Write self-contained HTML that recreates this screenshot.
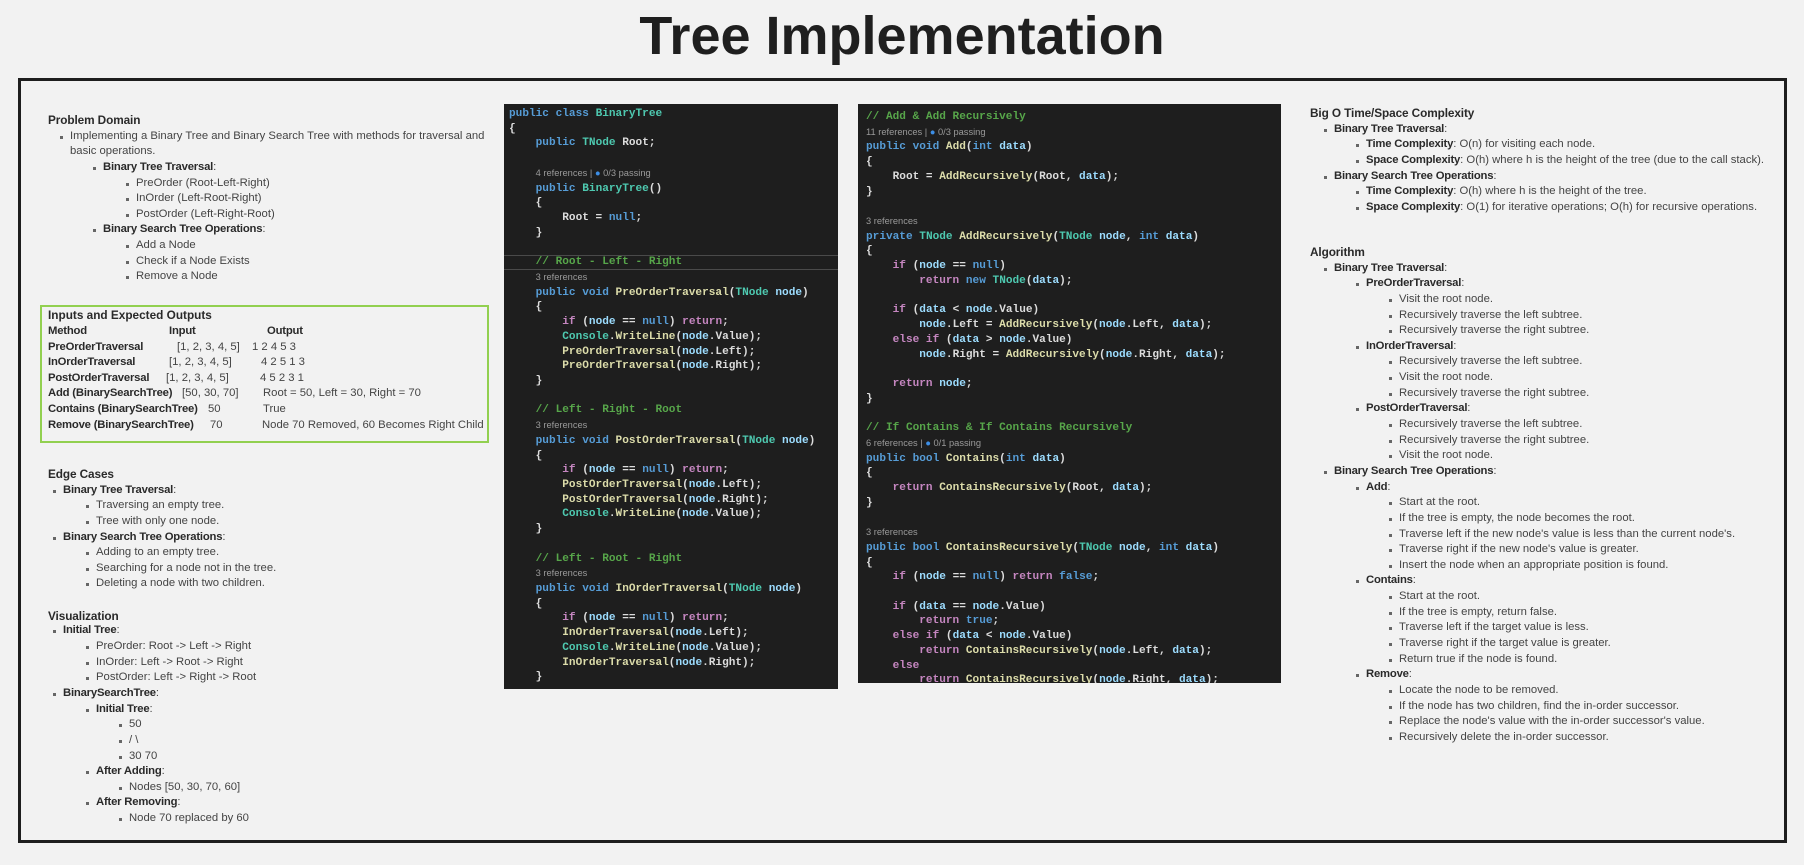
<!DOCTYPE html>
<html><head><meta charset="utf-8">
<style>
*{margin:0;padding:0;box-sizing:border-box}
body{width:1804px;height:865px;background:#f2f2f2;position:relative;overflow:hidden;font-family:"Liberation Sans",sans-serif;color:#444}
h1{position:absolute;left:0;width:1804px;top:9px;line-height:1;text-align:center;font-size:54px;font-weight:bold;color:#1f1f1f}
.frame{position:absolute;left:18px;top:78px;width:1769px;height:765px;border:3.5px solid #1e1e1e}
.blk{position:absolute;font-size:11.3px;line-height:15.65px;white-space:nowrap}
.blk div{position:relative;height:15.65px}
.h{font-weight:bold;color:#2a2a2a;font-size:11.8px;letter-spacing:-0.1px}
b{color:#2a2a2a;letter-spacing:-0.2px}
.b::before{content:"";position:absolute;width:3px;height:3px;background:#666;left:-10px;top:7px}
.code{position:absolute;background:#1e1e1e;overflow:hidden}
.code pre{font-family:"Liberation Mono",monospace;font-size:11.1px;line-height:14.72px;color:#dcdcdc;font-weight:bold;position:absolute}
.k{color:#569cd6}.t{color:#4ec9b0}.m{color:#dcdcaa}.v{color:#9cdcfe}.c{color:#c586c0}.g{color:#57a64a}
.r{font-family:"Liberation Sans",sans-serif;font-size:9.3px;color:#9a9a9a;font-weight:normal}
.r i{font-style:normal;color:#3c8ee6}
.green{position:absolute;left:40px;top:305px;width:449px;height:138px;border:2px solid #92d050}
.tb{position:absolute;font-size:11.3px;white-space:nowrap;line-height:15.7px}
</style></head><body>
<h1>Tree Implementation</h1>
<div class="frame"></div>

<div class="blk" style="left:48px;top:113px">
<div class="h">Problem Domain</div>
<div class="b" style="left:22px">Implementing a Binary Tree and Binary Search Tree with methods for traversal and</div>
<div style="left:22px">basic operations.</div>
<div class="b" style="left:55px"><b>Binary Tree Traversal</b>:</div>
<div class="b" style="left:88px">PreOrder (Root-Left-Right)</div>
<div class="b" style="left:88px">InOrder (Left-Root-Right)</div>
<div class="b" style="left:88px">PostOrder (Left-Right-Root)</div>
<div class="b" style="left:55px"><b>Binary Search Tree Operations</b>:</div>
<div class="b" style="left:88px">Add a Node</div>
<div class="b" style="left:88px">Check if a Node Exists</div>
<div class="b" style="left:88px">Remove a Node</div>
</div>

<div class="green"></div>
<div class="tb" style="left:48px;top:308px;font-weight:bold;color:#2a2a2a;font-size:11.8px">Inputs and Expected Outputs</div>
<div class="tb" style="left:48px;top:324px"><b>Method</b></div>
<div class="tb" style="left:169px;top:324px"><b>Input</b></div>
<div class="tb" style="left:267px;top:324px"><b>Output</b></div>
<div class="tb" style="left:48px;top:340px"><b>PreOrderTraversal</b></div><div class="tb" style="left:177px;top:340px">[1, 2, 3, 4, 5]</div><div class="tb" style="left:252px;top:340px">1 2 4 5 3</div>
<div class="tb" style="left:48px;top:355px"><b>InOrderTraversal</b></div><div class="tb" style="left:169px;top:355px">[1, 2, 3, 4, 5]</div><div class="tb" style="left:261px;top:355px">4 2 5 1 3</div>
<div class="tb" style="left:48px;top:371px"><b>PostOrderTraversal</b></div><div class="tb" style="left:166px;top:371px">[1, 2, 3, 4, 5]</div><div class="tb" style="left:260px;top:371px">4 5 2 3 1</div>
<div class="tb" style="left:48px;top:386px"><b>Add (BinarySearchTree)</b></div><div class="tb" style="left:182px;top:386px">[50, 30, 70]</div><div class="tb" style="left:263px;top:386px">Root = 50, Left = 30, Right = 70</div>
<div class="tb" style="left:48px;top:402px"><b>Contains (BinarySearchTree)</b></div><div class="tb" style="left:208px;top:402px">50</div><div class="tb" style="left:263px;top:402px">True</div>
<div class="tb" style="left:48px;top:418px"><b>Remove (BinarySearchTree)</b></div><div class="tb" style="left:210px;top:418px">70</div><div class="tb" style="left:262px;top:418px">Node 70 Removed, 60 Becomes Right Child</div>

<div class="blk" style="left:48px;top:467px">
<div class="h">Edge Cases</div>
<div class="b" style="left:15px"><b>Binary Tree Traversal</b>:</div>
<div class="b" style="left:48px">Traversing an empty tree.</div>
<div class="b" style="left:48px">Tree with only one node.</div>
<div class="b" style="left:15px"><b>Binary Search Tree Operations</b>:</div>
<div class="b" style="left:48px">Adding to an empty tree.</div>
<div class="b" style="left:48px">Searching for a node not in the tree.</div>
<div class="b" style="left:48px">Deleting a node with two children.</div>
<div></div>
<div class="h" style="top:1px">Visualization</div>
<div class="b" style="left:15px"><b>Initial Tree</b>:</div>
<div class="b" style="left:48px">PreOrder: Root -&gt; Left -&gt; Right</div>
<div class="b" style="left:48px">InOrder: Left -&gt; Root -&gt; Right</div>
<div class="b" style="left:48px">PostOrder: Left -&gt; Right -&gt; Root</div>
<div class="b" style="left:15px"><b>BinarySearchTree</b>:</div>
<div class="b" style="left:48px"><b>Initial Tree</b>:</div>
<div class="b" style="left:81px">50</div>
<div class="b" style="left:81px">/ \</div>
<div class="b" style="left:81px">30 70</div>
<div class="b" style="left:48px"><b>After Adding</b>:</div>
<div class="b" style="left:81px">Nodes [50, 30, 70, 60]</div>
<div class="b" style="left:48px"><b>After Removing</b>:</div>
<div class="b" style="left:81px">Node 70 replaced by 60</div>
</div>

<div class="code" style="left:504px;top:104px;width:334px;height:585px">
<div style="position:absolute;left:0;right:0;top:151px;height:15px;border-top:1px solid #4a4a4a;border-bottom:1px solid #4a4a4a"></div>
<pre style="left:5px;top:3px"><span class="k">public class</span> <span class="t">BinaryTree</span>
{
    <span class="k">public</span> <span class="t">TNode</span> Root;

    <span class="r">4 references | <i>●</i> 0/3 passing</span>
    <span class="k">public</span> <span class="t">BinaryTree</span>()
    {
        Root = <span class="k">null</span>;
    }

    <span class="g">// Root - Left - Right</span>
    <span class="r">3 references</span>
    <span class="k">public void</span> <span class="m">PreOrderTraversal</span>(<span class="t">TNode</span> <span class="v">node</span>)
    {
        <span class="c">if</span> (<span class="v">node</span> == <span class="k">null</span>) <span class="c">return</span>;
        <span class="t">Console</span>.<span class="m">WriteLine</span>(<span class="v">node</span>.Value);
        <span class="m">PreOrderTraversal</span>(<span class="v">node</span>.Left);
        <span class="m">PreOrderTraversal</span>(<span class="v">node</span>.Right);
    }

    <span class="g">// Left - Right - Root</span>
    <span class="r">3 references</span>
    <span class="k">public void</span> <span class="m">PostOrderTraversal</span>(<span class="t">TNode</span> <span class="v">node</span>)
    {
        <span class="c">if</span> (<span class="v">node</span> == <span class="k">null</span>) <span class="c">return</span>;
        <span class="m">PostOrderTraversal</span>(<span class="v">node</span>.Left);
        <span class="m">PostOrderTraversal</span>(<span class="v">node</span>.Right);
        <span class="t">Console</span>.<span class="m">WriteLine</span>(<span class="v">node</span>.Value);
    }

    <span class="g">// Left - Root - Right</span>
    <span class="r">3 references</span>
    <span class="k">public void</span> <span class="m">InOrderTraversal</span>(<span class="t">TNode</span> <span class="v">node</span>)
    {
        <span class="c">if</span> (<span class="v">node</span> == <span class="k">null</span>) <span class="c">return</span>;
        <span class="m">InOrderTraversal</span>(<span class="v">node</span>.Left);
        <span class="t">Console</span>.<span class="m">WriteLine</span>(<span class="v">node</span>.Value);
        <span class="m">InOrderTraversal</span>(<span class="v">node</span>.Right);
    }</pre>
</div>

<div class="code" style="left:858px;top:104px;width:423px;height:579px">
<pre style="left:8px;top:6px"><span class="g">// Add &amp; Add Recursively</span>
<span class="r">11 references | <i>●</i> 0/3 passing</span>
<span class="k">public void</span> <span class="m">Add</span>(<span class="k">int</span> <span class="v">data</span>)
{
    Root = <span class="m">AddRecursively</span>(Root, <span class="v">data</span>);
}

<span class="r">3 references</span>
<span class="k">private</span> <span class="t">TNode</span> <span class="m">AddRecursively</span>(<span class="t">TNode</span> <span class="v">node</span>, <span class="k">int</span> <span class="v">data</span>)
{
    <span class="c">if</span> (<span class="v">node</span> == <span class="k">null</span>)
        <span class="c">return</span> <span class="k">new</span> <span class="t">TNode</span>(<span class="v">data</span>);

    <span class="c">if</span> (<span class="v">data</span> &lt; <span class="v">node</span>.Value)
        <span class="v">node</span>.Left = <span class="m">AddRecursively</span>(<span class="v">node</span>.Left, <span class="v">data</span>);
    <span class="c">else if</span> (<span class="v">data</span> &gt; <span class="v">node</span>.Value)
        <span class="v">node</span>.Right = <span class="m">AddRecursively</span>(<span class="v">node</span>.Right, <span class="v">data</span>);

    <span class="c">return</span> <span class="v">node</span>;
}

<span class="g">// If Contains &amp; If Contains Recursively</span>
<span class="r">6 references | <i>●</i> 0/1 passing</span>
<span class="k">public bool</span> <span class="m">Contains</span>(<span class="k">int</span> <span class="v">data</span>)
{
    <span class="c">return</span> <span class="m">ContainsRecursively</span>(Root, <span class="v">data</span>);
}

<span class="r">3 references</span>
<span class="k">public bool</span> <span class="m">ContainsRecursively</span>(<span class="t">TNode</span> <span class="v">node</span>, <span class="k">int</span> <span class="v">data</span>)
{
    <span class="c">if</span> (<span class="v">node</span> == <span class="k">null</span>) <span class="c">return</span> <span class="k">false</span>;

    <span class="c">if</span> (<span class="v">data</span> == <span class="v">node</span>.Value)
        <span class="c">return</span> <span class="k">true</span>;
    <span class="c">else if</span> (<span class="v">data</span> &lt; <span class="v">node</span>.Value)
        <span class="c">return</span> <span class="m">ContainsRecursively</span>(<span class="v">node</span>.Left, <span class="v">data</span>);
    <span class="c">else</span>
        <span class="c">return</span> <span class="m">ContainsRecursively</span>(<span class="v">node</span>.Right, <span class="v">data</span>);</pre>
</div>

<div class="blk" style="left:1310px;top:106px">
<div class="h">Big O Time/Space Complexity</div>
<div class="b" style="left:24px"><b>Binary Tree Traversal</b>:</div>
<div class="b" style="left:56px"><b>Time Complexity</b>: O(n) for visiting each node.</div>
<div class="b" style="left:56px"><b>Space Complexity</b>: O(h) where h is the height of the tree (due to the call stack).</div>
<div class="b" style="left:24px"><b>Binary Search Tree Operations</b>:</div>
<div class="b" style="left:56px"><b>Time Complexity</b>: O(h) where h is the height of the tree.</div>
<div class="b" style="left:56px"><b>Space Complexity</b>: O(1) for iterative operations; O(h) for recursive operations.</div>
</div>
<div class="blk" style="left:1310px;top:245px">
<div class="h">Algorithm</div>
<div class="b" style="left:24px"><b>Binary Tree Traversal</b>:</div>
<div class="b" style="left:56px"><b>PreOrderTraversal</b>:</div>
<div class="b" style="left:89px">Visit the root node.</div>
<div class="b" style="left:89px">Recursively traverse the left subtree.</div>
<div class="b" style="left:89px">Recursively traverse the right subtree.</div>
<div class="b" style="left:56px"><b>InOrderTraversal</b>:</div>
<div class="b" style="left:89px">Recursively traverse the left subtree.</div>
<div class="b" style="left:89px">Visit the root node.</div>
<div class="b" style="left:89px">Recursively traverse the right subtree.</div>
<div class="b" style="left:56px"><b>PostOrderTraversal</b>:</div>
<div class="b" style="left:89px">Recursively traverse the left subtree.</div>
<div class="b" style="left:89px">Recursively traverse the right subtree.</div>
<div class="b" style="left:89px">Visit the root node.</div>
<div class="b" style="left:24px"><b>Binary Search Tree Operations</b>:</div>
<div class="b" style="left:56px"><b>Add</b>:</div>
<div class="b" style="left:89px">Start at the root.</div>
<div class="b" style="left:89px">If the tree is empty, the node becomes the root.</div>
<div class="b" style="left:89px">Traverse left if the new node's value is less than the current node's.</div>
<div class="b" style="left:89px">Traverse right if the new node's value is greater.</div>
<div class="b" style="left:89px">Insert the node when an appropriate position is found.</div>
<div class="b" style="left:56px"><b>Contains</b>:</div>
<div class="b" style="left:89px">Start at the root.</div>
<div class="b" style="left:89px">If the tree is empty, return false.</div>
<div class="b" style="left:89px">Traverse left if the target value is less.</div>
<div class="b" style="left:89px">Traverse right if the target value is greater.</div>
<div class="b" style="left:89px">Return true if the node is found.</div>
<div class="b" style="left:56px"><b>Remove</b>:</div>
<div class="b" style="left:89px">Locate the node to be removed.</div>
<div class="b" style="left:89px">If the node has two children, find the in-order successor.</div>
<div class="b" style="left:89px">Replace the node's value with the in-order successor's value.</div>
<div class="b" style="left:89px">Recursively delete the in-order successor.</div>
</div>
</body></html>
